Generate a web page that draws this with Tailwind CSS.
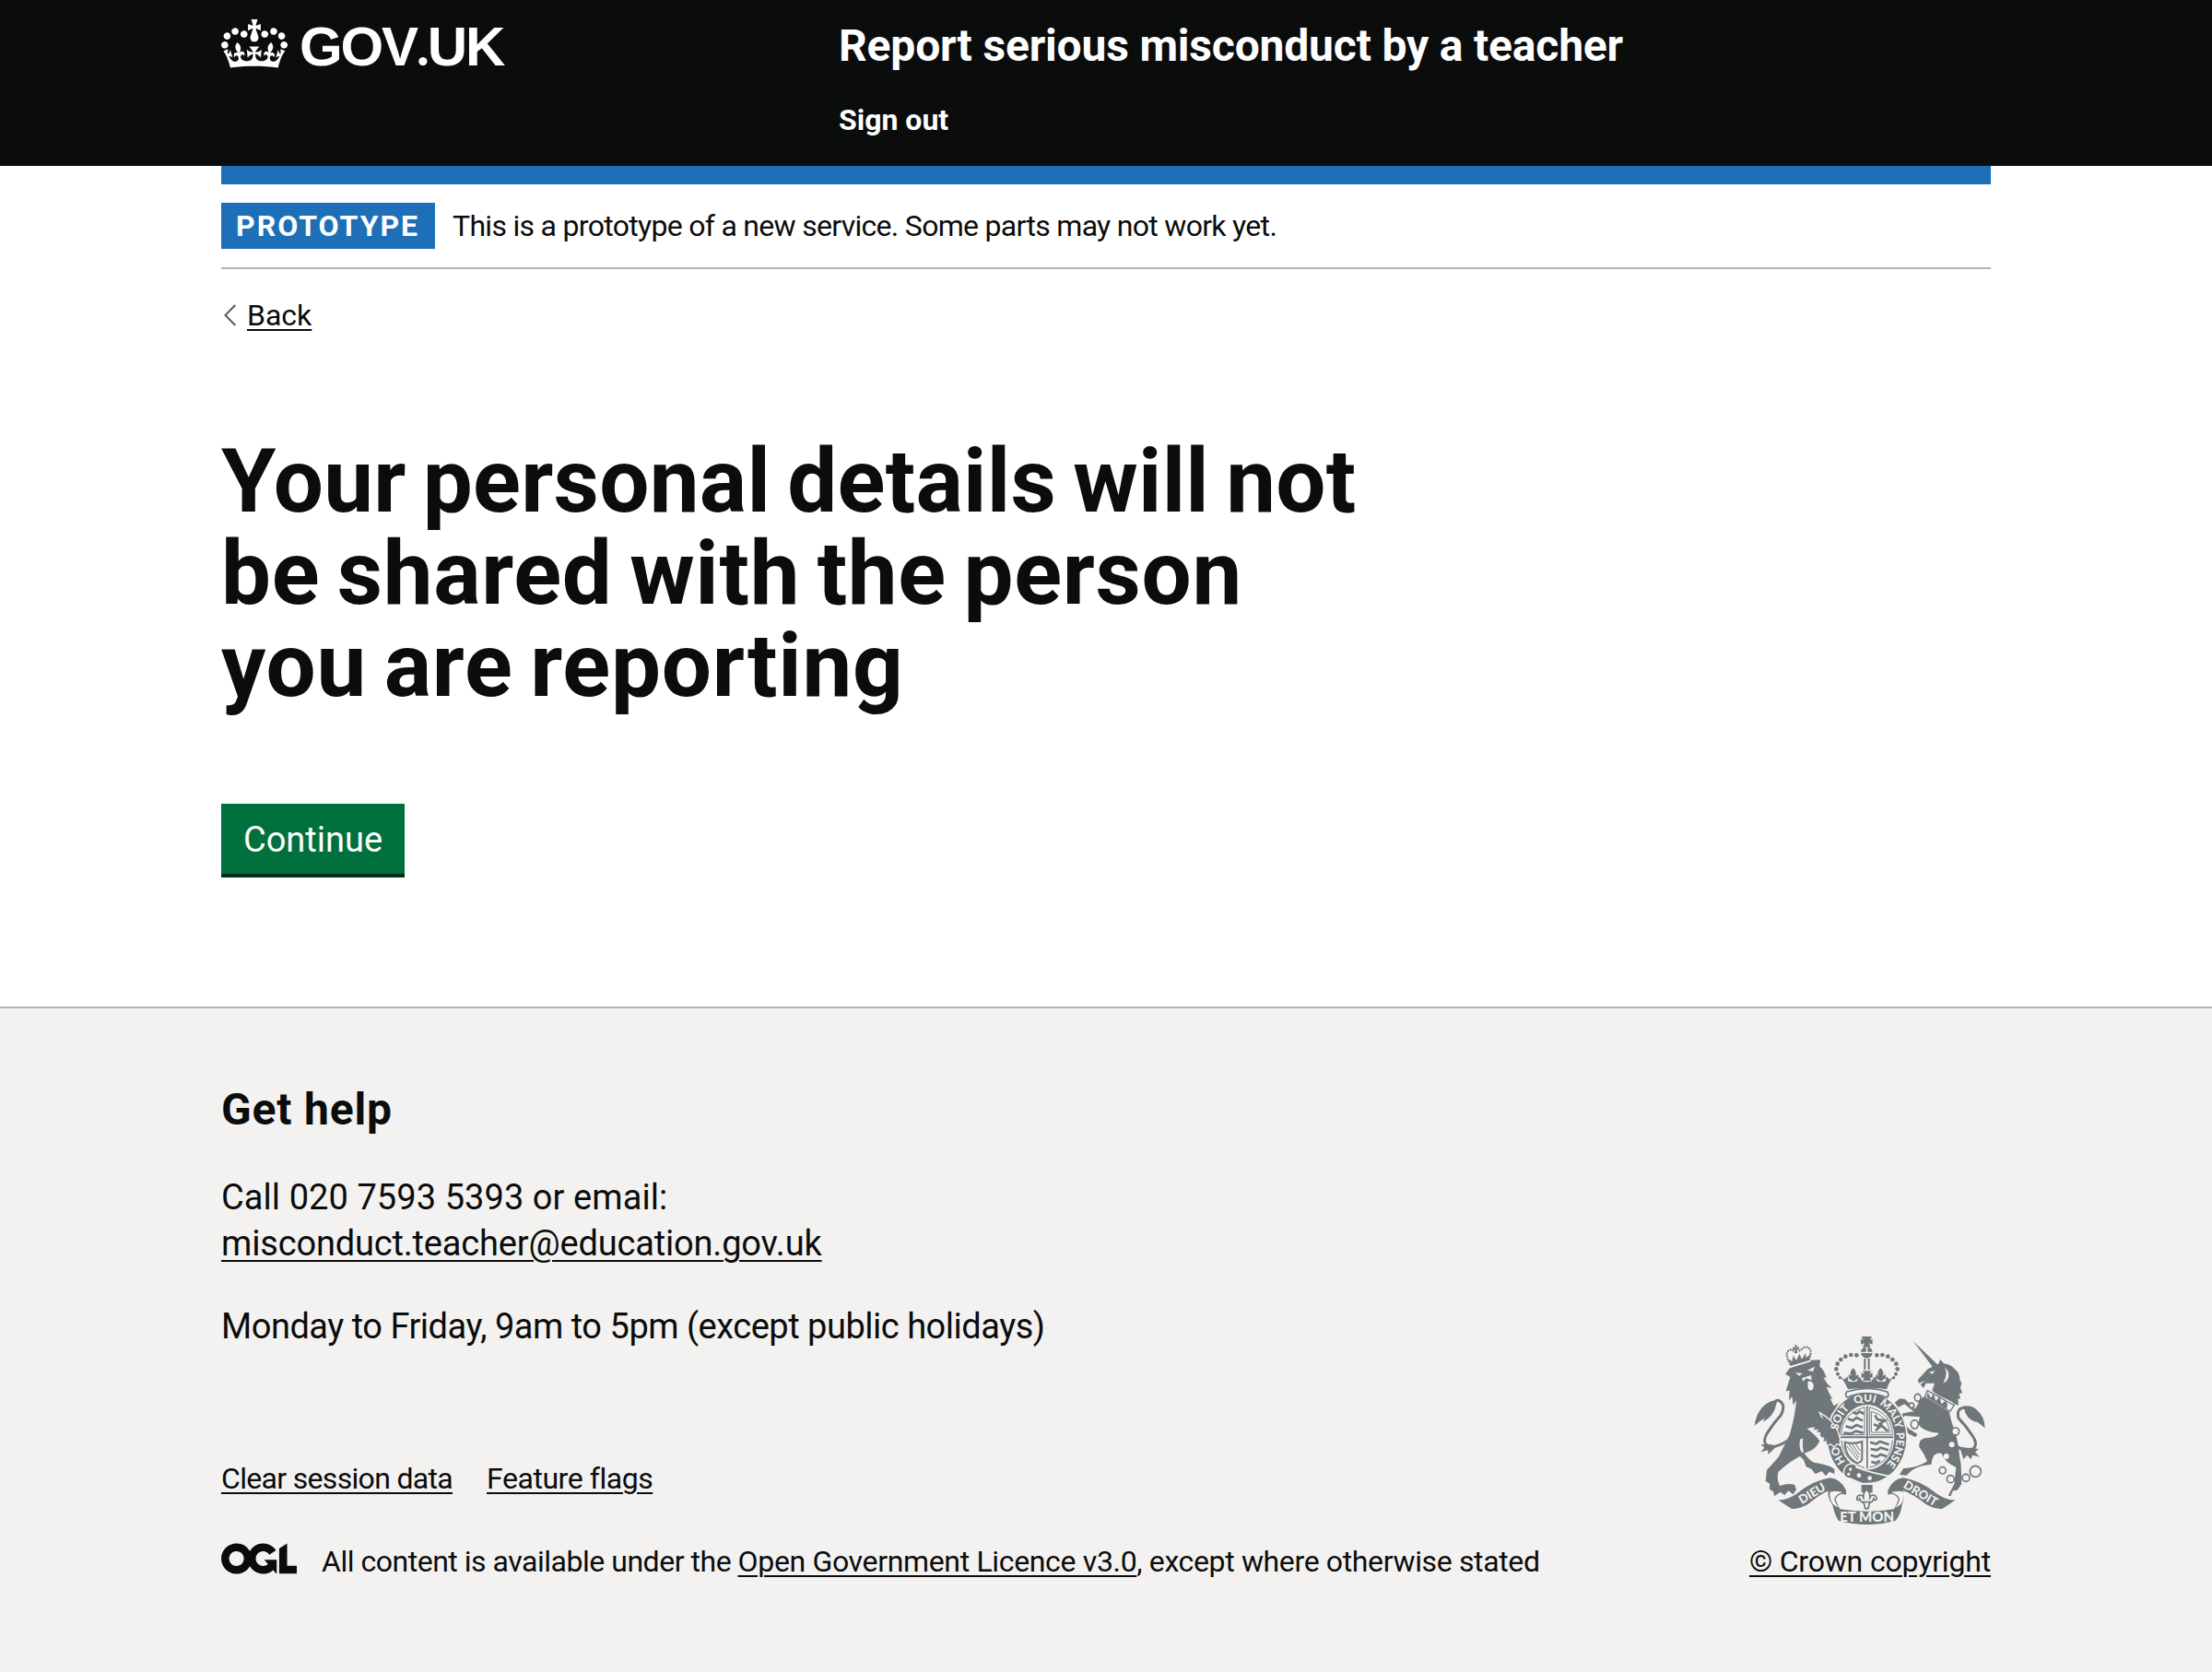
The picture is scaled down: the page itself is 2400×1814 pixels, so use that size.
<!DOCTYPE html>
<html lang="en">
<head>
<meta charset="utf-8">
<title>Report serious misconduct by a teacher</title>
<script src="https://cdn.jsdelivr.net/npm/@tailwindcss/browser@4"></script>
</head>
<body class="bg-[#f3f2f1] font-[Roboto,sans-serif] text-[#0b0c0c]">

<header class="h-[180px] bg-[#0b0c0c] px-[240px] text-white">
  <div class="flex pt-5">
    <a class="flex w-[670px] items-start" aria-label="GOV.UK">
      <svg class="mt-px h-[53px] w-[72px]" viewBox="0 0 132 97" fill="currentColor"><path d="M25 30.2c3.5 1.5 7.7-.2 9.1-3.7 1.5-3.6-.2-7.8-3.9-9.2-3.6-1.4-7.6.3-9.1 3.9-1.4 3.5.3 7.5 3.9 9zM9 39.5c3.6 1.5 7.8-.2 9.2-3.7 1.5-3.6-.2-7.8-3.9-9.1-3.6-1.5-7.6.2-9.1 3.8-1.4 3.5.3 7.5 3.8 9zM4.4 57.2c3.5 1.5 7.7-.2 9.1-3.8 1.5-3.6-.2-7.7-3.9-9.1-3.5-1.5-7.6.3-9.1 3.8-1.4 3.5.3 7.6 3.9 9.1zm38.3-21.4c3.5 1.5 7.7-.2 9.1-3.8 1.5-3.6-.2-7.7-3.9-9.1-3.6-1.5-7.6.3-9.1 3.8-1.3 3.6.4 7.7 3.9 9.1zm64.4-5.6c-3.6 1.5-7.8-.2-9.1-3.7-1.5-3.6.2-7.8 3.8-9.2 3.6-1.4 7.7.3 9.2 3.9 1.3 3.5-.4 7.5-3.9 9zm15.9 9.3c-3.6 1.5-7.7-.2-9.1-3.7-1.5-3.6.2-7.8 3.7-9.1 3.6-1.5 7.7.2 9.2 3.8 1.5 3.5-.3 7.5-3.8 9zm4.7 17.7c-3.6 1.5-7.8-.2-9.2-3.8-1.5-3.6.2-7.7 3.9-9.1 3.6-1.5 7.7.3 9.2 3.8 1.3 3.5-.4 7.6-3.9 9.1zM89.3 35.8c-3.6 1.5-7.8-.2-9.2-3.8-1.4-3.6.2-7.7 3.9-9.1 3.6-1.5 7.7.3 9.2 3.8 1.4 3.6-.3 7.7-3.9 9.1zM69.7 17.7l8.9 4.7V9.3l-8.9 2.8c-.2-.3-.5-.6-.9-.9L72.4 0H59.6l3.5 11.2c-.3.3-.6.5-.9.9l-8.8-2.8v13.1l8.8-4.7c.3.3.6.7.9.9l-5 15.4v.1c-.2.8-.4 1.6-.4 2.4 0 4.1 3.1 7.5 7 8.1h.2c.3 0 .7.1 1 .1.4 0 .7 0 1-.1h.2c4-.6 7.1-4.1 7.1-8.1 0-.8-.1-1.7-.4-2.4V34l-5.1-15.4c.4-.2.7-.6 1-.9zM66 92.8c16.9 0 32.8 1.1 47.1 3.2 4-16.9 8.9-26.7 14-33.5l-9.6-3.4c1 4.9 1.1 7.2 0 10.2-1.5-1.4-3-4.3-4.2-8.7L108.6 76c2.8-2 5-3.2 7.5-3.3-4.4 9.4-10 11.9-13.6 11.2-4.3-.8-6.3-4.6-5.6-7.9 1-4.7 5.7-5.9 8-.5 4.3-8.7-3-11.4-7.6-8.8 7.1-7.2 7.9-13.5 2.1-21.1-8 6.1-8.1 12.3-4.5 20.8-4.7-5.4-12.1-2.5-9.5 6.2 3.4-5.2 7.9-2 7.2 3.1-.6 4.3-6.4 7.8-13.5 7.2-10.3-.9-10.9-8-11.2-13.8 2.5-.5 7.1 1.8 11 7.3L80.2 60c-4.1 4.4-8 5.3-12.3 5.4 1.4-4.4 8-11.6 8-11.6H55.5s6.4 7.2 7.9 11.6c-4.2-.1-8-1-12.3-5.4l1.4 16.4c3.9-5.5 8.5-7.7 10.9-7.3-.3 5.8-.9 12.8-11.1 13.8-7.2.6-12.9-2.9-13.5-7.2-.7-5 3.8-8.3 7.1-3.1 2.7-8.7-4.6-11.6-9.4-6.2 3.7-8.5 3.6-14.7-4.6-20.8-5.8 7.6-5 13.9 2.2 21.1-4.7-2.6-11.9.1-7.7 8.8 2.3-5.5 7.1-4.2 8.1.5.7 3.3-1.3 7.1-5.7 7.9-3.5.7-9-1.8-13.5-11.2 2.5.1 4.7 1.3 7.5 3.3l-4.7-15.4c-1.2 4.4-2.7 7.2-4.3 8.7-1.1-3-.9-5.3 0-10.2l-9.5 3.4c5 6.9 9.9 16.7 14 33.5 14.8-2.1 30.8-3.2 47.7-3.2z"/></svg>
      <span class="-mt-0.5 ml-[13px] font-['Liberation_Sans',sans-serif] text-[60px]/[60px] font-bold tracking-[-2.2px]">GOV<span class="font-[Lato,sans-serif]">.</span>UK</span>
    </a>
    <div class="font-bold">
      <div class="text-[48px]/[60px] tracking-[-0.18px]">Report serious misconduct by a teacher</div>
      <nav class="mt-[30px] text-[32px]/[40px]">Sign out</nav>
    </div>
  </div>
</header>

<main class="h-[912px] bg-white px-[240px]">
  <div class="h-5 bg-[#1d70b8]"></div>
  <div class="flex h-[92px] items-start gap-[19px] border-b-2 border-[#b1b4b6] pt-5">
    <strong class="h-[50px] w-[232px] bg-[#1d70b8] pt-[5px] pl-4 text-[32px]/[40px] tracking-[2px] text-white">PROTOTYPE</strong>
    <span class="pt-[5px] text-[32px]/[40px] tracking-[-0.7px]">This is a prototype of a new service. Some parts may not work yet.</span>
  </div>
  <a class="mt-[30px] flex items-center text-[32px]/[40px]">
    <svg class="mr-[12px] ml-[3px] h-[24px] w-[13px]" viewBox="0 0 13 24" fill="none" stroke="#505a5f" stroke-width="2"><path d="M12.3 1 1.5 12l10.8 11"/></svg>
    <span class="underline decoration-2 underline-offset-4">Back</span>
  </a>
  <h1 class="mt-[110px] text-[96px]/[100px] font-bold [word-spacing:-6px]"><span class="tracking-[0.28px]">Your personal details will not</span><br><span class="tracking-[0.7px]">be shared with the person</span><br><span class="tracking-[0.8px]">you are reporting</span></h1>
  <button class="mt-[100px] block h-20 w-[199px] border-b-4 border-[#002d18] bg-[#00703c] pt-0.5 text-[38px]/[38px] text-white">Continue</button>
</main>

<footer class="h-[722px] border-t-2 border-[#b1b4b6] px-[240px] pt-20">
  <h2 class="text-[48px]/[60px] font-bold tracking-[0.8px]">Get help</h2>
  <p class="mt-10 text-[38px]/[50px]"><span class="tracking-[0.07px]">Call 020 7593 5393 or email:</span><br><a class="tracking-[-0.17px] underline decoration-2 underline-offset-[5px]">misconduct.teacher@education.gov.uk</a></p>
  <p class="mt-10 text-[38px]/[50px] tracking-[-0.48px]">Monday to Friday, 9am to 5pm (except public holidays)</p>
  <div class="flex items-end justify-between">
    <div class="text-[32px]/[40px]">
      <div class="flex gap-[37px]">
        <a class="tracking-[-0.68px] underline decoration-2 underline-offset-4">Clear session data</a>
        <a class="tracking-[-0.45px] underline decoration-2 underline-offset-4">Feature flags</a>
      </div>
      <div class="mt-[50px] flex">
        <svg class="h-[34px] w-[83px]" viewBox="0 0 489 195.7" fill="currentColor"><path d="M421.5 142.8V.1l-50.7 32.3v161.1h112.4v-50.7zm-122.3-9.6A47.12 47.12 0 0 1 221 97.8c0-26 21.1-47.1 47.1-47.1 16.7 0 31.4 8.7 39.7 21.8l42.7-27.2A97.63 97.63 0 0 0 268.1 0c-36.5 0-68.3 20.1-85.1 49.7A98 98 0 0 0 97.8 0C43.9 0 0 43.9 0 97.8s43.9 97.8 97.8 97.8c36.5 0 68.3-20.1 85.1-49.7a97.76 97.76 0 0 0 149.6 25.4l19.4 22.2h3v-87.8h-80l24.3 27.5zM97.8 145c-26 0-47.1-21.1-47.1-47.1s21.1-47.1 47.1-47.1 47.1 21.1 47.1 47.1S123.8 145 97.8 145"/></svg>
        <span class="ml-[26px]"><span class="tracking-[-0.48px]">All content is available under the </span><a class="tracking-[-0.34px] underline decoration-2 underline-offset-4">Open Government Licence v3.0</a><span class="tracking-[-0.36px]">, except where otherwise stated</span></span>
      </div>
    </div>
    <div class="-mt-[14px] flex flex-col items-end">
      <svg class="mr-[5px] h-[204px] w-[252px]" viewBox="70 60 756 612" fill="#6f777b">
        <!-- lion -->
        <path d="M172 182 187 162 258 137 286 136 284 158Q298 166 306 196L296 192Q306 214 324 228L306 224Q314 245 326 264L318 262Q324 274 330 286L346 276Q334 300 320 318Q336 350 345 380L347 412L334 406L330 420L318 408L308 414L310 398L296 402L300 384L284 384L292 370L274 372L280 362L262 364L270 356Q256 354 243 360Q270 380 284 400Q272 430 234 440Q256 472 276 472Q300 476 320 484L332 492V508L316 500L304 514L290 498L270 508L258 492L240 484L232 462L220 450Q184 468 150 500Q142 520 154 546Q180 536 202 542L208 558L198 574L182 562L170 576L156 566L136 580L134 566L120 556L122 540L108 530L112 494Q126 480 150 452Q166 420 186 380Q204 320 208 268L198 284L194 256L184 268L186 236L174 238L188 192Z"/>
        <path d="M222 392Q214 412 224 436L232 438Q226 412 230 394Z" fill="#f3f2f1"/>
        <path d="M213 372Q160 420 128 418Q92 414 112 376Q134 342 158 316Q176 280 150 268Q136 268 138 278" fill="none" stroke="#6f777b" stroke-width="9"/>
        <path d="M140 268Q108 272 90 300Q76 318 72 350Q90 334 104 326L100 338Q138 318 144 274ZM126 412 92 412 104 422 92 436 116 430 116 444 144 418Z"/>
        <g fill="none" stroke="#6f777b" stroke-width="7" stroke-linecap="round" stroke-dasharray="0.1 9"><path d="M188 150Q164 108 192 102L206 112M250 134Q264 94 236 94L212 110"/></g>
        <path d="M190 156 183 132 194 142 198 122 208 138 218 116 226 134 238 114 240 130 250 120 251 138ZM196 94 204 98 202 88H210L208 96 216 92V104L209 101 212 114H205L203 102 196 104Z"/>
        <g fill="#f3f2f1"><path d="M204 178 228 180 218 188ZM244 170 268 158 262 174ZM226 196 256 186 258 202 240 196 230 206ZM244 208Q256 200 264 216Q266 234 254 236Q242 232 246 214Z"/><path d="m184 163 3-6 66-20 2 5-68 21Z"/></g>
        <!-- unicorn -->
        <path d="M588 75 664 148 668 156 652 160ZM604 200 636 166 672 148 676 134 688 148Q712 152 722 164Q742 180 740 200L746 212L742 226L748 244L738 246L742 264L734 262L736 284L722 280Q710 268 684 258Q660 246 650 236L658 212L630 212L622 228L612 216L628 204L606 212Z"/>
        <path d="M622 256 706 306Q712 340 728 380L736 420Q738 450 744 476L746 540L732 560L718 562L710 580L702 578L722 540L728 486Q692 470 680 440Q650 436 648 476Q604 480 584 496L566 512L544 510L556 490L584 486Q610 482 634 466Q624 440 608 420Q604 390 636 390Q664 388 672 374Q620 370 604 344L610 322L560 318L552 334L574 360L602 378L596 388L572 376L556 350L540 326L556 310L590 304L560 280L540 290L528 276L544 262L562 264L592 296Q606 284 606 270Z"/>
        <path d="M634 236 722 284 708 304 626 258Z" fill="#f3f2f1" stroke="#6f777b" stroke-width="4"/><path d="m632 258 4-16 10 18 8-14 8 24 12-14 6 24 12-10 8 8-2 18Z"/>
        <path d="M722 412Q742 432 784 426Q800 410 782 384Q760 350 736 326Q728 292 756 292" fill="none" stroke="#6f777b" stroke-width="9"/>
        <path d="M748 288Q782 280 800 304Q820 320 822 358Q806 344 790 334L796 340Q760 330 754 294ZM740 420 752 460 764 446 776 460 782 446 804 452 790 436 802 426Z"/>
        <path d="M640 176 660 172 650 182ZM690 160Q704 180 686 212L698 204Q714 180 690 160Z" fill="#f3f2f1"/>
        <g fill="#f3f2f1"><circle cx="714" cy="412" r="9"/><circle cx="696" cy="450" r="9"/></g>
        <g fill="#f3f2f1" stroke="#6f777b" stroke-width="5"><ellipse cx="603" cy="259" rx="10" ry="12"/><ellipse cx="583" cy="284" rx="8" ry="8"/><ellipse cx="593" cy="346" rx="12" ry="14"/><circle cx="726" cy="369" r="12"/><circle cx="684" cy="496" r="11"/><circle cx="710" cy="524" r="12"/><circle cx="760" cy="520" r="12"/><circle cx="791" cy="499" r="18"/></g>
        <!-- garter and shield -->
        <ellipse cx="438" cy="390" rx="133" ry="150" fill="#f3f2f1"/>
        <ellipse cx="438" cy="390" rx="128" ry="146"/>
        <ellipse cx="438" cy="388" rx="89" ry="106" fill="#f3f2f1"/>
        <path d="M436 286h5v204h-5zM352 385h172v6H352z"/>
        <g fill="none" stroke="#6f777b">
          <path d="M354 380Q356 312 430 290V380ZM446 290Q520 312 521 380H446ZM354 398Q364 470 430 488M446 486Q516 470 521 398" stroke-width="3"/>
          <path d="M392 306l12 6 10-8 14 8M376 328l16 6 12-10 20 10M368 352l20 6 16-10 20 8M362 374l24 2 16-8 24 6M448 404l20 6 12-8 30 10M450 426l20 4 12-8 26 8M450 446l20 6 12-8 20 6M452 468l16 4 12-8" stroke-width="8"/>
          <path d="M452 304Q508 318 512 372H452Z" stroke-width="3"/>
          <path d="m464 316 8 14 24 4-16 10 14 14 12 10M466 366l14-12-20-8" stroke-width="8"/>
          <path d="M366 404Q390 412 422 402V458Q420 470 406 472Q366 450 366 404Z" stroke-width="6"/>
          <path d="M378 408 412 456M388 408 414 446M400 408 416 432M372 416 408 462" stroke-width="3"/>
        </g>
        <!-- lion's forepaw, laid over the garter -->
        <path d="M284 308Q326 330 343 368L350 392 350 414 340 410 330 420 320 410 306 416 304 350Z" stroke="#f3f2f1" stroke-width="4"/>
        <path d="M280 318 308 336 316 412 306 404 304 390 290 388 280 350Z"/>
        <path id="garter" d="M438 504A96 116 0 0 1 438 272A96 116 0 0 1 438 504" fill="none"/>
        <g fill="#f3f2f1" class="font-[Lato,sans-serif] text-[36px] font-black" text-anchor="middle">
          <text><textPath href="#garter" startOffset="16.5%">HO</textPath></text>
          <text><textPath href="#garter" startOffset="34.5%">SOIT</textPath></text>
          <text><textPath href="#garter" startOffset="49%">QUI</textPath></text>
          <text><textPath href="#garter" startOffset="63.5%">MALY</textPath></text>
          <text><textPath href="#garter" startOffset="81%">PENSE</textPath></text>
        </g>
        <path d="M362 506Q362 476 388 474Q404 474 404 486Q450 504 510 514Q470 544 420 538Q398 530 384 522Q366 522 362 506Z" stroke="#f3f2f1" stroke-width="5"/>
        <g fill="#f3f2f1"><circle cx="412" cy="512" r="7"/><circle cx="447" cy="521" r="7"/><circle cx="384" cy="492" r="5"/><circle cx="378" cy="508" r="5"/></g>
        <!-- crown -->
        <path d="M350 188 364 200 374 190 378 206 392 208 404 206 412 190 424 206 438 208 452 206 464 190 472 206 484 208 498 206 502 190 512 200 526 188Q508 210 502 232Q438 222 376 232Q368 210 350 188Z"/>
        <path d="M372 240Q438 218 504 240Q512 254 502 258Q438 232 374 258Q364 252 372 240Z" fill="#f3f2f1" stroke="#6f777b" stroke-width="5"/>
        <path d="M420 60h34l-6 12 8-4v18l-12-4 6 12h-26l6-12-12 4V68l8 4ZM418 110Q420 96 435 94V110ZM440 94Q454 96 456 110H440ZM418 114H456Q454 128 438 131Q420 128 418 114ZM428 132h6v36h-6zM441 132h6v36h-6zM424 172h28l-6 10 10-4v18l-10-4 6 12h-28l6-12-10 4v-18l10 4ZM393 162Q408 178 400 188L410 184V196L394 206 378 196V184L387 188Q378 178 393 162ZM482 162Q497 178 489 188L499 184V196L483 206 467 196V184L476 188Q467 178 482 162Z"/>
        <g><circle cx="404" cy="121" r="7"/><circle cx="386" cy="120" r="7"/><circle cx="368" cy="125" r="7"/><circle cx="353" cy="135" r="7"/><circle cx="342" cy="149" r="7"/><circle cx="338" cy="166" r="7"/><circle cx="343" cy="182" r="6"/><circle cx="350" cy="194" r="5"/><circle cx="470" cy="121" r="7"/><circle cx="488" cy="120" r="7"/><circle cx="506" cy="125" r="7"/><circle cx="521" cy="135" r="7"/><circle cx="533" cy="149" r="7"/><circle cx="537" cy="166" r="7"/><circle cx="532" cy="182" r="6"/><circle cx="525" cy="194" r="5"/></g>
        <!-- ribbon -->
        <path d="M148 592Q176 594 206 574Q262 528 318 520Q352 524 370 560V576Q348 564 316 560Q280 576 246 606Q212 624 192 620Q172 608 148 592Z"/>
        <path d="M726 592Q698 594 668 574Q612 528 556 520Q522 524 506 560V576Q528 564 548 558Q594 576 630 606Q662 624 684 620Q704 608 726 592Z"/>
        <path d="M312 560Q348 552 366 574Q344 570 336 590Q340 604 350 622Q438 636 526 622Q536 604 540 590Q532 570 508 574Q524 552 552 558Q566 570 552 608Q548 640 530 660Q438 684 346 660Q332 640 326 608Q308 584 312 560Z"/>
        <path d="M318 566Q340 560 358 568Q334 574 332 592Q336 606 346 616Q330 612 324 600Q314 582 318 566ZM558 566Q536 560 516 568Q542 574 544 592Q540 606 530 616Q546 612 552 600Q562 582 558 566Z" fill="#f3f2f1"/>
        <g fill="#f3f2f1" class="font-[Lato,sans-serif] font-black" text-anchor="middle">
          <text transform="translate(266 582) rotate(-31)" class="text-[39px]">DIEU</text>
          <text transform="translate(606 582) rotate(31)" class="text-[39px]">DROIT</text>
          <text x="438" y="663" class="text-[45px]">ET MON</text>
        </g>
        <path d="M420 543H456V568H420Z"/>
        <path d="M437 556Q452 572 446 590Q448 576 460 576Q472 580 468 592Q462 594 460 588Q456 600 446 602L442 620H432L428 602Q418 600 414 588Q412 594 406 592Q402 580 414 576Q426 576 428 590Q422 572 437 556Z" fill="#f3f2f1" stroke="#6f777b" stroke-width="5"/><path d="M424 596h26v5h-26z"/>
      </svg>
      <a class="mt-5 text-[32px]/[40px] tracking-[-0.17px] underline decoration-2 underline-offset-4">© Crown copyright</a>
    </div>
  </div>
</footer>
</body>
</html>
